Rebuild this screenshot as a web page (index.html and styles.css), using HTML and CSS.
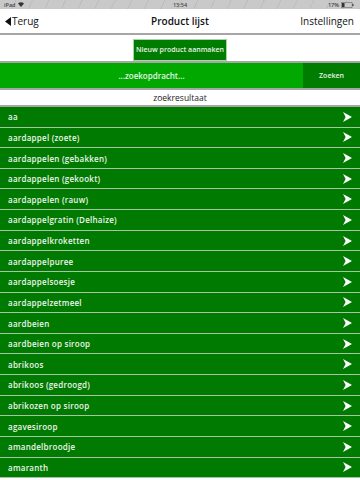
FILE: index.html
```html
<!DOCTYPE html>
<html lang="nl">
<head>
    <meta charset="UTF-8">
    <meta name="viewport" content="width=device-width, initial-scale=1.0">
    <title>Product lijst</title>
    <link rel="stylesheet" href="styles.css">
</head>
<body>
    <div class="statusbar">
        <span class="status-left">iPad
            <svg width="6" height="5" viewBox="0 0 12 10"><path d="M6 10 L0 3 Q6 -2 12 3 Z" fill="#333"/></svg>
        </span>
        <span class="status-time">13:54</span>
        <span class="status-right">17%
            <svg width="13" height="6" viewBox="0 0 26 12"><rect x="0.5" y="0.5" width="22" height="11" rx="2" fill="none" stroke="#333"/><rect x="2" y="2" width="5" height="8" fill="#333"/><rect x="23" y="4" width="2" height="4" fill="#333"/></svg>
        </span>
    </div>

    <header class="navbar">
        <a href="#" class="nav-back">
            <svg width="6" height="9" viewBox="0 0 6 9"><polygon points="6,0 6,9 0,4.5" fill="#111"/></svg>Terug
        </a>
        <span class="nav-title">Product lijst</span>
        <a href="#" class="nav-settings">Instellingen</a>
    </header>

    <div class="actions">
        <a href="#" class="button">Nieuw product aanmaken</a>
    </div>

    <form class="search">
        <input class="search-input" type="text" placeholder="...zoekopdracht...">
        <button class="search-button" type="button">Zoeken</button>
    </form>

    <div class="results-title">zoekresultaat</div>

    <ul class="products">
        <li><span>aa</span><i></i></li>
        <li><span>aardappel (zoete)</span><i></i></li>
        <li><span>aardappelen (gebakken)</span><i></i></li>
        <li><span>aardappelen (gekookt)</span><i></i></li>
        <li><span>aardappelen (rauw)</span><i></i></li>
        <li><span>aardappelgratin (Delhaize)</span><i></i></li>
        <li><span>aardappelkroketten</span><i></i></li>
        <li><span>aardappelpuree</span><i></i></li>
        <li><span>aardappelsoesje</span><i></i></li>
        <li><span>aardappelzetmeel</span><i></i></li>
        <li><span>aardbeien</span><i></i></li>
        <li><span>aardbeien op siroop</span><i></i></li>
        <li><span>abrikoos</span><i></i></li>
        <li><span>abrikoos (gedroogd)</span><i></i></li>
        <li><span>abrikozen op siroop</span><i></i></li>
        <li><span>agavesiroop</span><i></i></li>
        <li><span>amandelbroodje</span><i></i></li>
        <li><span>amaranth</span><i></i></li>
    </ul>

    <script>
        // pijltje rechts in elke rij
        document.querySelectorAll('.products i').forEach(function (el) {
            el.innerHTML = '<svg width="9" height="10" viewBox="0 0 9 10"><polygon points="0,0 9,5 0,10 2.6,5" fill="#fff"/></svg>';
        });
    </script>
</body>
</html>
```

FILE: styles.css
```css
* {
    box-sizing: border-box;
}

body {
    margin: 0;
    width: 360px;
    height: 480px;
    overflow: hidden;
    background-color: #ffffff;
    font-family: "Open Sans", "DejaVu Sans", sans-serif;
}

/* Statusbalk */
.statusbar {
    height: 9.4px;
    display: flex;
    align-items: center;
    justify-content: space-between;
    padding: 0 6px 0 4px;
    font-size: 5.5px;
    font-weight: 600;
    color: #444;
    background: repeating-linear-gradient(115deg, #c9c9c9 0 14px, #bdbdbd 14px 15px);
    position: relative;
}

.status-left,
.status-right {
    display: flex;
    align-items: center;
    gap: 2px;
}

.status-time {
    position: absolute;
    left: 0;
    right: 0;
    text-align: center;
}

/* Navigatie */
.navbar {
    height: 25.6px;
    display: flex;
    align-items: center;
    justify-content: space-between;
    padding: 0 6px 0 5px;
    border-bottom: 2px solid #a6a6a6;
    position: relative;
}

.navbar a {
    color: #111;
    text-decoration: none;
    font-size: 10px;
}

.nav-back {
    display: flex;
    align-items: center;
    gap: 1px;
}

.nav-title {
    position: absolute;
    left: 0;
    right: 0;
    text-align: center;
    font-size: 10px;
    font-weight: 600;
    color: #111;
    pointer-events: none;
}

/* Knop */
.actions {
    height: 28px;
    display: flex;
    justify-content: center;
    padding-top: 4px;
    border-bottom: 2px solid #a6a6a6;
}

.button {
    width: 94px;
    height: 22px;
    display: flex;
    align-items: center;
    justify-content: center;
    font-size: 7px;
    font-weight: 600;
    color: #eaf4ea;
    text-decoration: none;
    background-color: #007c00;
    border: 1px solid #a9d6a9;
}

/* Zoeken */
.search {
    display: flex;
    height: 27px;
    margin: 0;
    border-bottom: 2px solid #a6a6a6;
}

.search-input {
    flex: 1;
    border: none;
    outline: none;
    background-color: #00a800;
    color: #fff;
    text-align: center;
    font-family: inherit;
    font-size: 8px;
    font-weight: 600;
    padding: 0;
}

.search-input::placeholder {
    color: #e6f5e6;
}

.search-button {
    width: 57px;
    border: none;
    background-color: #007c00;
    color: #e6f2e6;
    font-family: inherit;
    font-size: 7px;
    font-weight: 600;
}

.results-title {
    height: 17px;
    display: flex;
    align-items: center;
    justify-content: center;
    font-size: 8.5px;
    color: #222;
    border-bottom: 2px solid #a6a6a6;
}

/* Productlijst */
.products {
    list-style: none;
    margin: 0;
    padding: 0;
}

.products li {
    height: 20.625px;
    display: flex;
    align-items: center;
    justify-content: space-between;
    padding: 0 8px 0 8px;
    background-color: #007a00;
    border-bottom: 1px solid #a3c7a3;
    color: #eef6ee;
    font-size: 8px;
    font-weight: 600;
    letter-spacing: 0.25px;
}

.products i {
    display: flex;
}
```
